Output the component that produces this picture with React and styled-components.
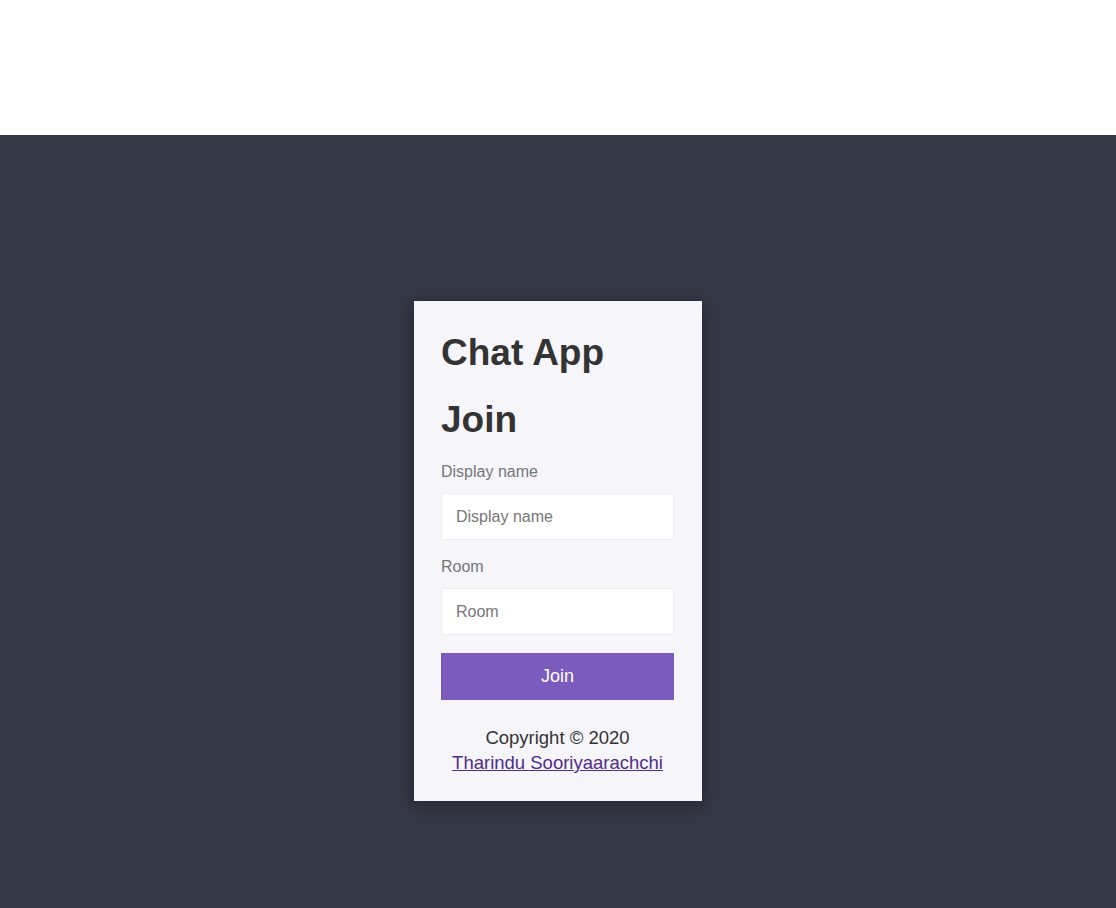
import React from "react";
import styled, { createGlobalStyle } from "styled-components";

const Global = createGlobalStyle`
  html, body { margin: 0; padding: 0; background: #fff; }
  body { font-family: "Liberation Sans", Arial, sans-serif; }
  * { box-sizing: border-box; }
`;

const Top = styled.div`
  height: 135px;
  background: #fff;
`;

const Stage = styled.main`
  background: #353845;
  min-height: 773px;
  display: flex;
  justify-content: center;
  padding-top: 166px;
`;

const Card = styled.div`
  width: 288px;
  height: 500px;
  background: #f5f5fa;
  box-shadow: 0 4px 16px rgba(0, 0, 0, 0.35);
  padding: 22px 28px 0 27px;
  display: flex;
  flex-direction: column;
`;

const Title = styled.h1`
  margin: 0;
  font-size: 37px;
  line-height: 60px;
  font-weight: 700;
  color: #333;
`;

const Heading = styled.h2`
  margin: 7px 0 0;
  font-size: 37px;
  line-height: 60px;
  font-weight: 700;
  color: #333;
`;

const Field = styled.label`
  display: flex;
  flex-direction: column;
  margin-top: ${(p) => p.$top}px;
`;

const LabelText = styled.span`
  font-size: 16px;
  line-height: 18px;
  color: #777;
`;

const Input = styled.input`
  margin-top: 12px;
  height: 47px;
  border: 1px solid #ececf2;
  background: #fff;
  padding: 0 14px;
  font-family: inherit;
  font-size: 16px;
  color: #333;
  outline: none;
  &::placeholder { color: #777; }
`;

const Button = styled.button`
  margin-top: 18px;
  height: 47px;
  border: none;
  background: #7b5bbd;
  color: #fff;
  font-family: inherit;
  font-size: 18px;
`;

const Footer = styled.footer`
  margin-top: 25px;
  text-align: center;
  font-size: 18.5px;
  line-height: 25px;
  color: #333;
`;

const Link = styled.a`
  color: #4f2d8c;
  text-decoration: underline;
`;

export default function App() {
  return (
    <>
      <Global />
      <Top />
      <Stage>
        <Card>
          <Title>Chat App</Title>
          <Heading>Join</Heading>
          <Field $top={13}>
            <LabelText>Display name</LabelText>
            <Input placeholder="Display name" />
          </Field>
          <Field $top={18}>
            <LabelText>Room</LabelText>
            <Input placeholder="Room" />
          </Field>
          <Button>Join</Button>
          <Footer>
            Copyright © 2020
            <br />
            <Link href="#">Tharindu Sooriyaarachchi</Link>
          </Footer>
        </Card>
      </Stage>
    </>
  );
}
